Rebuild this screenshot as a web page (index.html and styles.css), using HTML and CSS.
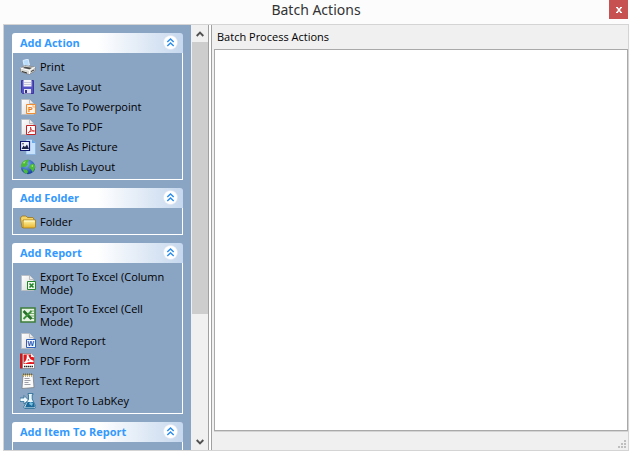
FILE: index.html
```html
<!DOCTYPE html>
<html lang="en">
<head>
<meta charset="utf-8">
<title>Batch Actions</title>
<link rel="stylesheet" href="styles.css">
</head>
<body>
<svg class="defs" aria-hidden="true">
  <defs>
    <linearGradient id="gold" x1="0" y1="0" x2="0" y2="1"><stop offset="0" stop-color="#fff6a8"/><stop offset="1" stop-color="#e8b52c"/></linearGradient>
    <linearGradient id="paper" x1="0" y1="0" x2="1" y2="1"><stop offset="0" stop-color="#ffffff"/><stop offset="1" stop-color="#d9d9d9"/></linearGradient>
    <radialGradient id="sea" cx=".4" cy=".3" r=".7"><stop offset="0" stop-color="#7db4ee"/><stop offset="1" stop-color="#153f9c"/></radialGradient>
    <symbol id="chevrons" viewBox="0 0 15 15">
      <circle cx="7.5" cy="7.5" r="7" fill="#fff" stroke="#dfe6f0" stroke-width=".6"/>
      <path d="M4.3 7 7.5 3.9 10.7 7M4.3 11 7.5 7.9 10.7 11" fill="none" stroke="#2a8cf0" stroke-width="1.4"/>
    </symbol>
    <symbol id="page" viewBox="0 0 16 16">
      <path d="M1.500.5h8l4 4v11h-12z" fill="url(#paper)" stroke="#b9bcc0" stroke-width=".8"/>
      <path d="M9.500.5v4h4" fill="#eee" stroke="#aaa" stroke-width=".7"/>
    </symbol>
  </defs>
</svg>
<div class="window">
  <header class="titlebar">
    <h1 class="title">Batch Actions</h1>
    <button class="close" aria-label="Close"><svg viewBox="0 0 6 6" width="6" height="6"><path d="M1 .5 5 5.500M5 .5 1 5.500" stroke="#fff" stroke-width="1.500"/><path d="M0 .5h2M4 .5h2M0 5.500h2M4 5.500h2" stroke="#fff"/></svg></button>
  </header>
  <main class="content">
    <nav class="sidebar" aria-label="Actions">
      <section class="panel">
        <button class="panel-head">Add Action<svg class="toggle"><use href="#chevrons"/></svg></button>
        <div class="panel-body">
          <button class="item"><svg class="icon" viewBox="0 0 16 16"><path d="M3 1.500 8 0l1.500 6-5 2z" fill="#b9dcfa" stroke="#e8f5ff" stroke-width=".8"/><path d="M.5 9 5 6.500l10 1.500v4L9 15.500.5 12.500z" fill="#d8d8d4" stroke="#777" stroke-width=".6"/><path d="m.5 9 9 2.500L15 8M9.500 11.500v3.500" fill="none" stroke="#fff"/><path d="M5 7.800 12 8.800 9.500 10.200 3 9z" fill="#4b4b4b"/><path d="m2 12.500 5 1.500M11 12.500l3-1.500" stroke="#333"/></svg><span class="label">Print</span></button>
          <button class="item"><svg class="icon" viewBox="0 0 16 16"><path d="M1.500 1.500h12v13h-11l-1-1z" fill="#5552c4" stroke="#3c379e"/><path d="M3.500 1h8v6.500h-8z" fill="#f3f3f8"/><path d="M4 3.500h7M4 5.500h7" stroke="#c5c5d8"/><path d="M4 10h7v4.500H4z" fill="#e2e2ee"/><path d="M5 11h2v3H5z" fill="#332f8e"/></svg><span class="label">Save Layout</span></button>
          <button class="item"><svg class="icon" viewBox="0 0 16 16"><use href="#page"/><path d="M6.500 5.500h9v9h-9z" fill="#fff4e5" stroke="#ef8c32"/><text class="glyph" x="8" y="13" fill="#e77817">P</text><path d="M12 7h2v2" fill="none" stroke="#f4b477"/></svg><span class="label">Save To Powerpoint</span></button>
          <button class="item"><svg class="icon" viewBox="0 0 16 16"><use href="#page"/><path d="M6.500 6.500h9v9h-9z" fill="#fff" stroke="#c42224"/><path d="M8 14c2-1 3-3 2.500-6 .5 3 1.500 4.500 4 4-2-.5-4.500 0-6.500 2" fill="none" stroke="#d13436" stroke-width=".9"/></svg><span class="label">Save To PDF</span></button>
          <button class="item"><svg class="icon" viewBox="0 0 16 16"><path d="M6 .5h6l3.500 3.500v11.500H6z" fill="#c7e1fa" stroke="#82afe0" stroke-width=".7"/><path d="M12 .5V4h3.500" fill="#69a8e8"/><path d="M.5 2.500h9v9h-9z" fill="#eef4fc" stroke="#10196f" stroke-width="1.200"/><path d="m1.500 10 2-3.500L5 8l2-2.500 2 4.500z" fill="#1b2448"/><circle cx="3" cy="4.700" r=".8" fill="#333"/></svg><span class="label">Save As Picture</span></button>
          <button class="item"><svg class="icon" viewBox="0 0 16 16"><circle cx="8" cy="8" r="7.200" fill="url(#sea)"/><path d="M2 4C4 1 7 .5 9 1L8 3l-1 1 1 1.500L5.500 8 3 7.500 1.500 9C.8 7 1 5.500 2 4M10 6l3-1.500 2 2c.5 3-1 5-2.500 6.500L11 10 9 9zM3 10l4 1 1 2-1.500 2C4.500 14.500 3.300 12.500 3 10" fill="#4cbb38"/><path d="M3 3.500 6 2l-2 3zM11 7l2-1v2z" fill="#a9e878"/></svg><span class="label">Publish Layout</span></button>
        </div>
      </section>
      <section class="panel">
        <button class="panel-head">Add Folder<svg class="toggle"><use href="#chevrons"/></svg></button>
        <div class="panel-body">
          <button class="item"><svg class="icon" viewBox="0 0 16 16"><path d="M.5 4 2 2h4l1.500 1.500H13l1 2v8H2z" fill="#f5d566" stroke="#9b741d" stroke-width=".8"/><path d="M3 6h12.500v7l-1 1H3z" fill="url(#gold)" stroke="#a67b1c" stroke-width=".8"/><path d="M4 7h10.500" stroke="#fffbd3"/></svg><span class="label">Folder</span></button>
        </div>
      </section>
      <section class="panel">
        <button class="panel-head">Add Report<svg class="toggle"><use href="#chevrons"/></svg></button>
        <div class="panel-body">
          <button class="item"><svg class="icon" viewBox="0 0 16 16"><use href="#page"/><path d="M7.500 6.500h8v8h-8z" fill="#eff9ed" stroke="#23832b"/><path d="m9.500 8.500 4 4M13.500 8.500l-4 4" stroke="#23832b" stroke-width="1.700"/></svg><span class="label">Export To Excel (Column Mode)</span></button>
          <button class="item"><svg class="icon" viewBox="0 0 16 16"><path d="M1 1h14v14H1z" fill="#e7f3e3" stroke="#3f7e3b" stroke-width="1.600"/><path d="M10 4h4M10 6.500h4M10 9h4M10 11.500h4" stroke="#78a971"/><path d="m3.500 4 8 8" stroke="#267229" stroke-width="2.600"/><path d="m11.500 4-8 8" stroke="#3d943b" stroke-width="1.800"/></svg><span class="label">Export To Excel (Cell Mode)</span></button>
          <button class="item"><svg class="icon" viewBox="0 0 16 16"><use href="#page"/><path d="M6.500 6.500h9v8h-9z" fill="#f4f8ff" stroke="#2d61bb"/><text class="glyph" x="7.500" y="13" fill="#1d50aa">W</text></svg><span class="label">Word Report</span></button>
          <button class="item"><svg class="icon" viewBox="0 0 16 16"><path d="M0 .5h3v15H0z" fill="#c9191d"/><path d="M2.500.5H11l3.500 3.500v11.500h-12z" fill="#fff" stroke="#777" stroke-width=".7"/><path d="M3.500 1.500H11l3 3V11H3.500z" fill="#e3181d"/><path d="M4.500 10C7 8 8 5 7.500 2c1 4 2.500 6 6 6.500-4-1-7 0-9 1.500" fill="none" stroke="#fff" stroke-width="1.600"/><path d="M4 13.500h9" stroke="#292929" stroke-width="1.500" stroke-dasharray="1.500 .5"/><path d="M11 .5V4h3.500" fill="#eee"/></svg><span class="label">PDF Form</span></button>
          <button class="item"><svg class="icon" viewBox="0 0 16 16"><path d="m3 2 10-.5 1 13L2 15.500z" fill="#fafafa" stroke="#777" stroke-width=".7"/><path d="M4.500 5.500h5M4.500 7.500h6M4.500 9.500h4M4.500 11.500h6" stroke="#92939e" stroke-width=".9"/><path d="M3.500.5v3M5.500.5v3M7.500.5v3M9.500.5v3M11.500.5v3" stroke="#796321"/><path d="M3 2.500h10" stroke="#d2ae42" stroke-dasharray="1 1"/></svg><span class="label">Text Report</span></button>
          <button class="item"><svg class="icon" viewBox="0 0 16 16"><path d="M8 .5h5v1.200h-.8V6l3.500 7.500-1 2h-10l-1-1.500L8.500 6V1.700H8z" fill="#e8f5fb" stroke="#226791" stroke-width=".8"/><path d="M7.500 9h6l1.500 4.500-1 1H5z" fill="#1c6999"/><path d="m9 11 1-2 3 1-1 3z" fill="#77bddd"/><path d="M0 5h4V2.500L8.500 7 4 11V8.500H0z" fill="#eef8ff" stroke="#2c7096" stroke-width=".8"/></svg><span class="label">Export To LabKey</span></button>
        </div>
      </section>
      <section class="panel">
        <button class="panel-head">Add Item To Report<svg class="toggle"><use href="#chevrons"/></svg></button>
        <div class="panel-body"></div>
      </section>
    </nav>
    <div class="scrollbar">
      <button class="arrow" aria-label="Scroll up"><svg viewBox="0 0 8 6" width="8" height="6"><path d="M.7 5 4 1.700 7.300 5" fill="none" stroke="#505050" stroke-width="1.900"/></svg></button>
      <div class="track"><div class="thumb"></div></div>
      <button class="arrow" aria-label="Scroll down"><svg viewBox="0 0 8 6" width="8" height="6"><path d="M.7 1 4 4.300 7.300 1" fill="none" stroke="#505050" stroke-width="1.900"/></svg></button>
    </div>
    <div class="splitter" role="separator" aria-orientation="vertical"></div>
    <section class="workspace">
      <h2 class="caption" id="list-label">Batch Process Actions</h2>
      <div class="list" role="listbox" aria-labelledby="list-label" tabindex="0"></div>
      <footer class="statusbar"><svg viewBox="0 0 8 8" width="8" height="8" shape-rendering="crispEdges"><path d="M6 0h2v2H6zM3 3h2v2H3zM6 3h2v2H6zM0 6h2v2H0zM3 6h2v2H3zM6 6h2v2H6z" fill="#bfbfbf"/></svg></footer>
    </section>
  </main>
</div>
</body>
</html>
```
FILE: styles.css
```css
* {
  box-sizing: border-box;
}

body {
  margin: 0;
  background: #fcfcfc;
  color: #000;
  font: 11px/13px "Open Sans", "Noto Sans", sans-serif;
}

button {
  margin: 0;
  padding: 0;
  border: 0;
  background: none;
  color: inherit;
  font: inherit;
  text-align: left;
}

.defs {
  position: absolute;
  width: 0;
  height: 0;
}

.window {
  display: flex;
  flex-direction: column;
  height: 100vh;
  padding: 0 1px 0 3px;
}

.titlebar {
  display: grid;
  grid-template-columns: 1fr auto 1fr;
  flex: none;
  height: 24px;
}

.title {
  grid-column: 2;
  margin: 0;
  color: #333;
  font: 14px/20px "Noto Sans", sans-serif;
}

.close {
  display: grid;
  place-items: center;
  justify-self: end;
  width: 19px;
  height: 19px;
  margin-right: 1px;
  background: #c75050;
}

.content {
  display: flex;
  flex: 1;
  min-height: 0;
  border: 1px solid #d4d4d4;
  background: #f0f0f0;
}

.sidebar {
  flex: none;
  width: 187px;
  padding: 8px;
  overflow: hidden;
  background: #8aa4c3;
}

.panel {
  margin-bottom: 8px;
}

.panel-head {
  display: flex;
  align-items: center;
  justify-content: space-between;
  width: 100%;
  height: 20px;
  padding: 0 5px 1px 8px;
  border-radius: 3px 3px 0 0;
  background: linear-gradient(90deg, #fff 50%, #c6d8ee);
  color: #3399ff;
  font-weight: bold;
}

.toggle {
  width: 15px;
  height: 15px;
}

.panel-body {
  min-height: 27px;
  padding: 4px 7px 2px;
  border: 1px solid #fff;
  border-top: 0;
}

.item {
  display: flex;
  align-items: center;
  gap: 4px;
  width: 100%;
  padding: 3px 0;
}

.icon {
  flex: none;
  width: 16px;
  height: 16px;
  margin: -1px 0;
}

.label {
  min-height: 14px;
}

.glyph {
  font: bold 7px "Liberation Sans", sans-serif;
}

.scrollbar {
  display: flex;
  flex: none;
  flex-direction: column;
  width: 17px;
  padding-left: 1px;
  background: #f0f0f0;
}

.arrow {
  display: grid;
  place-items: center;
  flex: none;
  height: 17px;
}

.track {
  flex: 1;
}

.thumb {
  height: 69.5%;
  background: #cdcdcd;
}

.splitter {
  flex: none;
  width: 4px;
  border: solid #a0a0a0;
  border-width: 0 1px;
  background: #fff;
}

.workspace {
  display: flex;
  flex: 1;
  flex-direction: column;
  min-width: 0;
  padding-left: 2px;
}

.caption {
  flex: none;
  margin: 0;
  padding: 0 3px;
  font-size: 11px;
  font-weight: normal;
  line-height: 24px;
}

.list {
  flex: 1;
  border: 1px solid #a9a9a9;
  background: #fff;
}

.statusbar {
  display: flex;
  align-items: flex-end;
  justify-content: flex-end;
  flex: none;
  height: 19px;
  padding: 2px;
  border-top: 1px solid #d4d4d4;
}
```
